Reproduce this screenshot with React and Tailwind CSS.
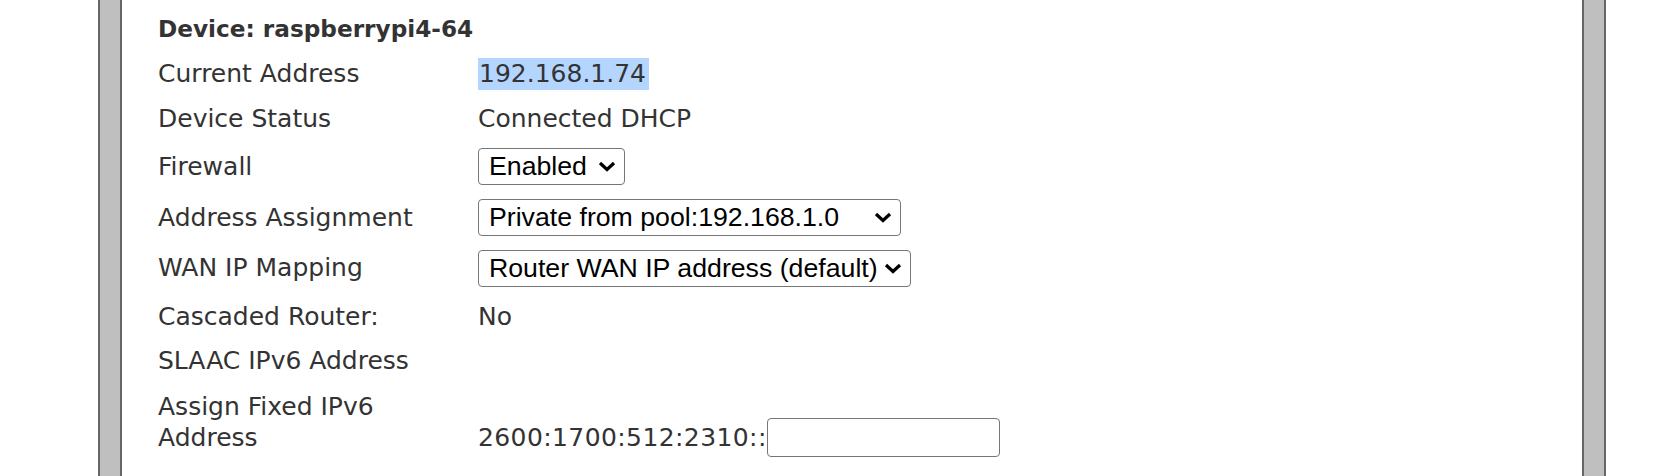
import React from "react";

const FakeSelect = ({ value, width }) => (
  <div
    className={`flex items-center justify-between h-[37px] ${width} border border-[#767676] rounded-[4px] bg-white pl-[10px] pr-[8px] font-['Liberation_Sans',Arial,sans-serif] text-[26.7px] text-black`}
  >
    <span className="whitespace-nowrap leading-none">{value}</span>
    <svg width="18" height="11" viewBox="0 0 18 11" className="shrink-0">
      <path d="M2 2 L9 8.5 L16 2" fill="none" stroke="#000" strokeWidth="3.2" strokeLinejoin="miter" />
    </svg>
  </div>
);

const Row = ({ label, height, children }) => (
  <div className={`flex items-center ${height}`}>
    <div className="w-[320px] shrink-0">{label}</div>
    <div className="flex items-center">{children}</div>
  </div>
);

export default function App() {
  return (
    <div className="h-[476px] overflow-hidden bg-white">
      <div className="ml-[98px] w-[1508px] h-full border-x-2 border-[#666] bg-[#bfbfbf] px-[20px]">
        <div className="h-full border-x-2 border-[#666] bg-white pl-[36px] pt-[7px] font-['DejaVu_Sans',Verdana,sans-serif] text-[25px] text-[#333]">
          {/* Title */}
          <h2 className="flex items-center h-[44px] text-[23.2px] font-bold">Device: raspberrypi4-64</h2>

          <Row label="Current Address" height="h-[45px]">
            <span className="inline-block bg-[#b4d5fe] leading-[32px] pl-[1px] pr-[3px]">192.168.1.74</span>
          </Row>
          <Row label="Device Status" height="h-[46px]">
            Connected DHCP
          </Row>
          <Row label="Firewall" height="h-[49px]">
            <FakeSelect value="Enabled" width="w-[147px]" />
          </Row>
          <Row label="Address Assignment" height="h-[53px]">
            <FakeSelect value="Private from pool:192.168.1.0" width="w-[423px]" />
          </Row>
          <Row label="WAN IP Mapping" height="h-[48px]">
            <FakeSelect value="Router WAN IP address (default)" width="w-[433px]" />
          </Row>
          <Row label="Cascaded Router:" height="h-[49px]">
            No
          </Row>
          <Row label="SLAAC IPv6 Address" height="h-[40px]">
            {""}
          </Row>

          {/* Fixed IPv6 row: label wraps to two lines */}
          <div className="flex items-start pt-[10px]">
            <div className="w-[320px] shrink-0 leading-[31px] pr-[20px]">Assign Fixed IPv6 Address</div>
            <div className="flex items-center h-[31px] mt-[31px]">
              <span className="whitespace-nowrap tracking-[0.4px]">2600:1700:512:2310::</span>
              <input
                type="text"
                className="w-[233px] h-[39px] border border-[#767676] rounded-[4px] bg-white outline-none"
              />
            </div>
          </div>
        </div>
      </div>
    </div>
  );
}
